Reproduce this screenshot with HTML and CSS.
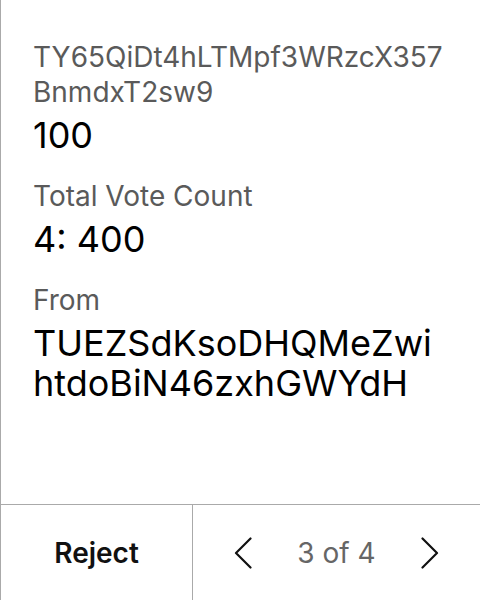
FILE: index.html
```html
<!DOCTYPE html>
<html>
<head>
<meta charset="utf-8">
<link rel="stylesheet" href="styles.css">
</head>
<body>
<div class="screen">
  <div class="content">
    <div class="group">
      <div class="label">TY65QiDt4hLTMpf3WRzcX357BnmdxT2sw9</div>
      <div class="value">100</div>
    </div>
    <div class="group">
      <div class="label">Total Vote Count</div>
      <div class="value">4: 400</div>
    </div>
    <div class="group">
      <div class="label">From</div>
      <div class="value">TUEZSdKsoDHQMeZwihtdoBiN46zxhGWYdH</div>
    </div>
  </div>
  <div class="footer">
    <div class="reject">Reject</div>
    <div class="pager">
      <svg class="chev" width="18" height="32" viewBox="0 0 18 32"><path d="M16.5 1.5 L2 16 L16.5 30.5" fill="none" stroke="#111" stroke-width="2.2" stroke-linecap="round" stroke-linejoin="round"/></svg>
      <span class="count">3 of 4</span>
      <svg class="chev" width="18" height="32" viewBox="0 0 18 32"><path d="M1.5 1.5 L16 16 L1.5 30.5" fill="none" stroke="#111" stroke-width="2.2" stroke-linecap="round" stroke-linejoin="round"/></svg>
    </div>
  </div>
</div>
</body>
</html>
```
FILE: styles.css
```css
html, body {
  margin: 0;
  padding: 0;
  background: #fff;
}
.screen {
  width: 480px;
  height: 600px;
  box-sizing: border-box;
  border-left: 1px solid #aaa;
  display: flex;
  flex-direction: column;
  font-family: Inter, "Noto Sans", sans-serif;
}
.content {
  flex: 1;
  padding: 40px 32px 0 32px;
  display: flex;
  flex-direction: column;
  gap: 24px;
}
.group {
  display: flex;
  flex-direction: column;
  gap: 5px;
}
.label {
  font-size: 28px;
  line-height: 35px;
  color: #5a5a5a;
  word-break: break-all;
}
.value {
  font-size: 36px;
  line-height: 40px;
  color: #000;
  word-break: break-all;
}
.footer {
  height: 96px;
  box-sizing: border-box;
  border-top: 1px solid #aaa;
  display: flex;
}
.reject {
  width: 191px;
  border-right: 1px solid #aaa;
  display: flex;
  align-items: center;
  justify-content: center;
  font-size: 28px;
  font-weight: 600;
  color: #111;
}
.pager {
  flex: 1;
  display: flex;
  align-items: center;
  justify-content: center;
  gap: 45px;
}
.count {
  font-size: 28px;
  color: #666;
}
```
